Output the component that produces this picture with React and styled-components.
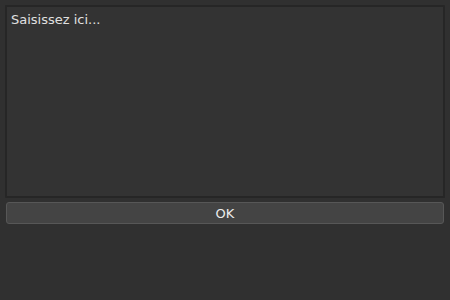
import React from "react";
import styled, { createGlobalStyle } from "styled-components";

const Global = createGlobalStyle`
  html, body { margin: 0; padding: 0; background: #303030; }
  body { width: 450px; height: 300px; overflow: hidden; }
`;

const Panel = styled.div`
  display: flex;
  flex-direction: column;
  gap: 4px;
  padding: 5px;
  box-sizing: border-box;
  width: 450px;
  height: 300px;
  background: #303030;
  font-family: "DejaVu Sans", sans-serif;
`;

const Editor = styled.textarea`
  box-sizing: border-box;
  width: 440px;
  height: 193px;
  margin: 0;
  padding: 5px 4px;
  resize: none;
  background: #333333;
  border: 2px solid #262626;
  border-radius: 1px;
  color: #e0e0e0;
  font-family: "DejaVu Sans", sans-serif;
  font-size: 13px;
  line-height: 16px;
  outline: none;
  &::placeholder { color: #e0e0e0; opacity: 1; }
`;

const Button = styled.button`
  box-sizing: border-box;
  margin: 0 1px;
  width: 438px;
  height: 22px;
  padding: 0;
  background: #444444;
  border: 1px solid #575757;
  border-radius: 3px;
  color: #ececec;
  font-family: "DejaVu Sans", sans-serif;
  font-size: 13px;
  cursor: pointer;
`;

export default function App() {
  return (
    <>
      <Global />
      <Panel>
        <Editor defaultValue="Saisissez ici..." />
        <Button>OK</Button>
      </Panel>
    </>
  );
}
